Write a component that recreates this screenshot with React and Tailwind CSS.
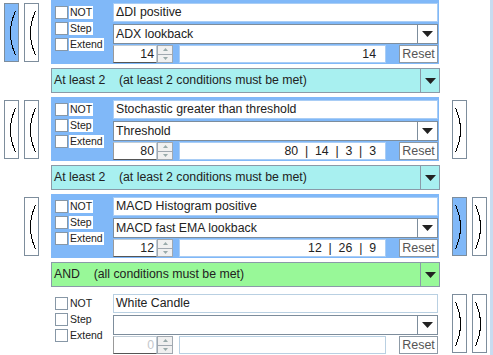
import React from 'react';

const font = { fontFamily: '"Liberation Sans", Arial, sans-serif' };

const Bracket = ({ side, filled }) => (
  <button
    type="button"
    className={`w-[15px] h-[59px] border border-[#7d8d9c] p-0 ${filled ? 'bg-[#80b8f8]' : 'bg-white'}`}
  >
    <svg width="13" height="57" viewBox="0 0 13 57" className="block">
      {side === 'left' ? (
        <path d="M10.5 7 Q0.5 29 10.5 51" fill="none" stroke="#000" strokeWidth="1" shapeRendering="crispEdges" />
      ) : (
        <path d="M2.5 7 Q12.5 29 2.5 51" fill="none" stroke="#000" strokeWidth="1" shapeRendering="crispEdges" />
      )}
    </svg>
  </button>
);

const Slot = ({ b, side }) => (
  <div className="w-[15px] h-[59px]">{b && <Bracket side={side} filled={b === 'blue'} />}</div>
);

const Arrow = () => (
  <svg width="11" height="6" viewBox="0 0 11 6" className="block">
    <path d="M0 0 H11 L5.5 6 Z" fill="#222" />
  </svg>
);

const Check = ({ label, panel }) => (
  <div className="flex items-center h-[13px]">
    <div className="w-[13px] h-[13px] bg-white border border-[#8797a6]" />
    <span className={`ml-[1px] h-[13px] leading-[13px] pl-[1px] pr-[1px] text-[10.5px] text-[#222] ${panel ? 'bg-white' : ''}`}>
      {label}
    </span>
  </div>
);

const Condition = ({ title, param, value, spin, panel, left, right, disabled }) => (
  <div className="flex items-center h-[64px]">
    <div className="ml-[4px] flex gap-[5px]">
      <Slot b={left[0]} side="left" />
      <Slot b={left[1]} side="left" />
    </div>
    <div className={`ml-[12px] w-[388px] h-[64px] flex pt-[3px] ${panel ? 'bg-[#80b8f8]' : 'bg-white'}`}>
      <div className="pl-[4px] pt-[3px] flex flex-col gap-[3px] w-[62px]">
        <Check label="NOT" panel={panel} />
        <Check label="Step" panel={panel} />
        <Check label="Extend" panel={panel} />
      </div>
      <div className="w-[325px] flex flex-col text-[12.3px] text-[#222]">
        <div className={`h-[19px] bg-white border ${panel ? 'border-[#a9cdf5]' : 'border-[#b9d0e2]'} px-[2px] leading-[17px]`}>
          {title}
        </div>
        <div className="mt-[2px] h-[20px] bg-white border border-[#7d8d9c] flex">
          <div className="flex-1 px-[2px] leading-[18px]">{param}</div>
          <div className="w-[20px] border-l border-[#7d8d9c] flex items-center justify-center">
            <Arrow />
          </div>
        </div>
        <div className="mt-[1px] h-[18px] flex">
          <div
            className={`w-[44px] h-[18px] bg-white border border-[#c0ccd6] border-b-[#555] border-l-[#999] text-right pr-[2px] leading-[16px] ${disabled ? 'text-[#c4c8cc]' : ''}`}
          >
            {spin}
          </div>
          <div className="w-[16px] h-[18px] flex flex-col border border-[#a0a8b0] bg-[#f0f0f0]">
            <div className="flex-1 border-b border-[#a0a8b0] flex items-center justify-center">
              <svg width="5" height="3" viewBox="0 0 5 3"><path d="M0 3 L2.5 0 L5 3 Z" fill="#9aa" /></svg>
            </div>
            <div className="flex-1 flex items-center justify-center">
              <svg width="5" height="3" viewBox="0 0 5 3"><path d="M0 0 L2.5 3 L5 0 Z" fill="#9aa" /></svg>
            </div>
          </div>
          <div
            className={`ml-[6px] w-[207px] h-[18px] bg-white border ${panel ? 'border-[#a9cdf5]' : 'border-[#b9d0e2]'} text-right pr-[9px] leading-[16px] whitespace-pre`}
          >
            {value}
          </div>
          <button
            type="button"
            className="ml-[13px] w-[39px] h-[18px] bg-white border border-[#8d9aa6] text-[12.5px] leading-[16px] text-[#555] p-0"
          >
            Reset
          </button>
        </div>
      </div>
    </div>
    <div className="ml-[13px] flex gap-[5px]">
      <Slot b={right[0]} side="right" />
      <Slot b={right[1]} side="right" />
    </div>
  </div>
);

const Combinator = ({ text, green }) => (
  <div
    className={`ml-[51px] my-[4px] w-[389px] h-[25px] border border-[#8a9aa8] flex text-[12.3px] text-[#222] ${green ? 'bg-[#98f898]' : 'bg-[#a8f0f0]'}`}
  >
    <div className="flex-1 pl-[2px] leading-[23px] whitespace-pre">{text}</div>
    <div className="w-[19px] border-l border-[#8a9aa8] flex items-center justify-center">
      <Arrow />
    </div>
  </div>
);

export default function App() {
  return (
    <div className="flex bg-white w-[493px] h-[355px] overflow-hidden" style={font}>
      <div className="w-[490px] flex flex-col">
        <Condition
          panel
          title="ΔDI positive"
          param="ADX lookback"
          spin="14"
          value="14"
          left={['blue', 'white']}
          right={[null, null]}
        />
        <Combinator text="At least 2    (at least 2 conditions must be met)" />
        <Condition
          panel
          title="Stochastic greater than threshold"
          param="Threshold"
          spin="80"
          value="80  |  14  |  3  |  3"
          left={['white', 'white']}
          right={['white', null]}
        />
        <Combinator text="At least 2    (at least 2 conditions must be met)" />
        <Condition
          panel
          title="MACD Histogram positive"
          param="MACD fast EMA lookback"
          spin="12"
          value="12  |  26  |  9"
          left={[null, 'white']}
          right={['blue', 'white']}
        />
        <Combinator green text="AND    (all conditions must be met)" />
        <Condition
          disabled
          title="White Candle"
          param=""
          spin="0"
          value=""
          left={[null, null]}
          right={['white', 'white']}
        />
      </div>
      <div className="w-[3px] h-full bg-[#c8dcf0]" />
    </div>
  );
}
